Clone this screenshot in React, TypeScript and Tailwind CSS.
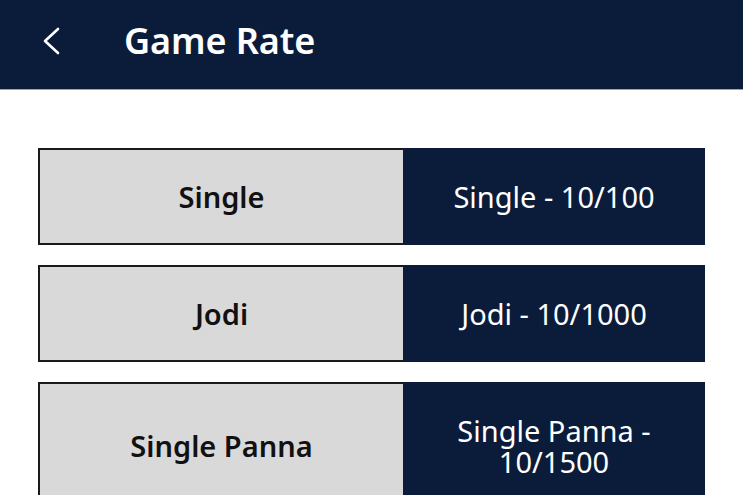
const rates = [
  { name: 'Single', rate: 'Single - 10/100' },
  { name: 'Jodi', rate: 'Jodi - 10/1000' },
  { name: 'Single Panna', rate: 'Single Panna - 10/1500' },
];

export default function App() {
  return (
    <div className="min-h-screen bg-white font-['Noto_Sans',sans-serif]">
      <header className="flex h-[90px] items-center border-b border-[#9aa3b5] bg-[#0b1c3b] pb-[8px] text-white">
        <svg className="ml-[40px]" width="22" height="30" viewBox="0 0 22 30" fill="none">
          <path d="M18 3 L5 15 L18 27" stroke="currentColor" strokeWidth="2.6" strokeLinecap="round" strokeLinejoin="round" />
        </svg>
        <h1 className="ml-[62px] text-[36px] font-semibold tracking-[-0.1px]">Game Rate</h1>
      </header>

      <div className="flex flex-col gap-5 px-[38px] pt-[58px]">
        {rates.map((r) => (
          <div key={r.name} className="flex">
            <div className="flex w-[365px] items-center justify-center border-2 border-r-0 border-[#1a1a1a] bg-[#d9d9d9] text-[29px] font-semibold text-[#111]">
              {r.name}
            </div>
            <div className="flex flex-1 items-center justify-center bg-[#0b1c3b] px-[40px] py-[33px] text-center text-[29px] leading-[31px] text-white">
              {r.rate}
            </div>
          </div>
        ))}
      </div>
    </div>
  );
}
